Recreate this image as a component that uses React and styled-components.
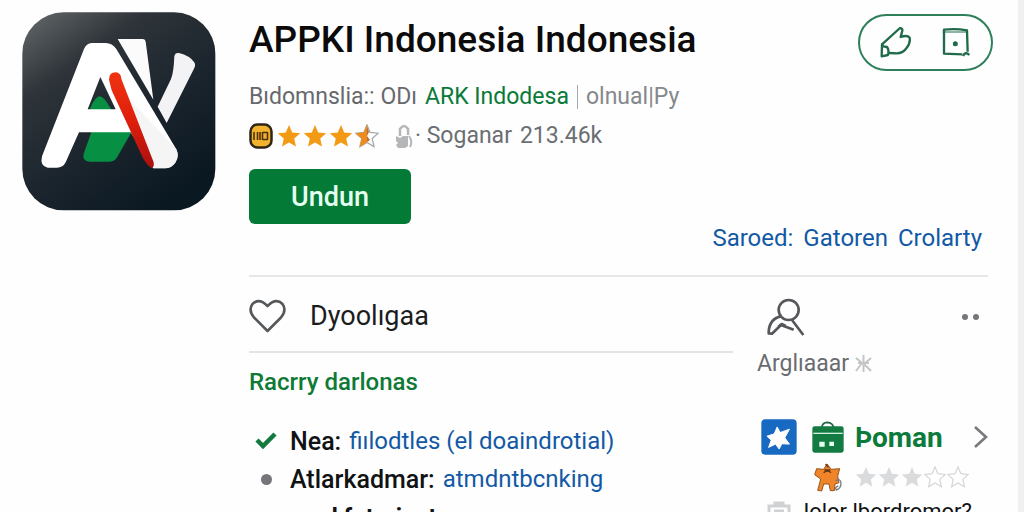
import React from 'react';
import styled, { createGlobalStyle } from 'styled-components';

const GlobalStyle = createGlobalStyle`
  * {
    box-sizing: border-box;
  }
  body {
    margin: 0;
    background: #fefefe;
    color: #1b1c1e;
    font-family: Roboto, 'Liberation Sans', sans-serif;
  }
  svg {
    display: block;
    flex: none;
  }
`;

const Page = styled.div`
  display: flex;
  align-items: flex-start;
  gap: 33px;
  height: 100vh;
  overflow: hidden;
  padding: 0 25px 0 22px;
  border-right: 6px solid #eff0f1;
`;

const LogoBox = styled.div`
  padding-top: 12px;
`;

const Main = styled.main`
  flex: 1;
  min-width: 0;
  padding-top: 14px;
`;

const Header = styled.header`
  display: flex;
  justify-content: space-between;
  align-items: flex-start;
`;

const Heading = styled.div`
  display: flex;
  flex-direction: column;
  align-items: flex-start;
  padding-top: 4px;
`;

const Title = styled.h1`
  margin: 0;
  font-size: 37px;
  font-weight: 500;
  line-height: 44px;
  color: #0b0b0c;
  white-space: nowrap;
`;

const Byline = styled.div`
  display: flex;
  gap: 8px;
  margin-top: 21px;
  font-size: 23px;
  line-height: 28px;
  color: #66696d;
  white-space: nowrap;
`;

const Publisher = styled.a`
  color: #087a38;
  text-decoration: none;
`;

const Separator = styled.span`
  width: 1px;
  height: 24px;
  margin-top: 2px;
  background: #a5a8ab;
`;

const Muted = styled.span`
  color: #85888c;
`;

const RatingRow = styled.div`
  display: flex;
  align-items: center;
  gap: 4px;
  margin-top: 11px;
  font-size: 23px;
  line-height: 28px;
  color: #6b6e72;
  white-space: nowrap;
`;

const Stars = styled.div`
  display: flex;
  gap: ${props => props.$gap}px;
`;

const Downloads = styled.span`
  display: flex;
  align-items: center;
  gap: 8px;
  margin-left: 12px;

  svg {
    margin-right: -6px;
  }
`;

const InstallButton = styled.button`
  width: 162px;
  height: 55px;
  margin-top: 19px;
  border: 0;
  border-radius: 6px;
  background: #047a37;
  color: #e6fff0;
  font: 500 27px Roboto, 'Liberation Sans', sans-serif;
`;

const ActionPill = styled.div`
  display: flex;
  align-items: center;
  gap: 30px;
  height: 57px;
  padding: 0 20px;
  border: 2px solid #2f7f5a;
  border-radius: 29px;
`;

const IconButton = styled.button`
  display: flex;
  padding: 0;
  border: 0;
  background: none;
  color: #1f6b49;
`;

const PolicyLinks = styled.nav`
  display: flex;
  justify-content: flex-end;
  gap: 10px;
  padding-right: 11px;
  font-size: 24px;
  line-height: 28px;
  white-space: nowrap;
`;

const BlueLink = styled.a`
  color: #1259a5;
  text-decoration: none;
`;

const Details = styled.div`
  display: grid;
  grid-template-columns: minmax(0, 1fr) 231px;
  column-gap: 24px;
  margin: 23px 5px 0 0;
  border-top: 2px solid #e4e6e8;
`;

const WishRow = styled.div`
  display: flex;
  align-items: center;
  gap: 24px;
  height: 76px;
  padding-top: 4px;
  border-bottom: 2px solid #e2e5e8;
`;

const WishLabel = styled.span`
  font-size: 27px;
  line-height: 36px;
`;

const SectionTitle = styled.h2`
  margin: 14px 0 0;
  font-size: 24px;
  font-weight: 500;
  line-height: 30px;
  color: #0e7a36;
`;

const FeatureList = styled.ul`
  margin: 25px 0 0;
  padding: 0;
  list-style: none;
`;

const Feature = styled.li`
  display: flex;
  align-items: center;
  height: 38px;
  font-size: ${props => (props.$strong ? 24 : 25)}px;
  font-weight: ${props => (props.$strong ? 700 : 500)};
  color: #111214;
  white-space: nowrap;

  a {
    margin-left: 8px;
    font-size: 24px;
    font-weight: 400;
  }
`;

const Marker = styled.span`
  display: flex;
  justify-content: center;
  width: 34px;
  margin-right: 7px;
`;

const Dot = styled.span`
  width: ${props => props.$size}px;
  height: ${props => props.$size}px;
  border-radius: 50%;
  background: #747679;
`;

const ProfileRow = styled.div`
  display: flex;
  align-items: center;
  justify-content: space-between;
  height: 73px;
  padding: 6px 9px 0 10px;
`;

const Dots = styled.span`
  display: flex;
  gap: 5px;
`;

const ProfileLabel = styled.div`
  display: flex;
  align-items: center;
  gap: 6px;
  font-size: 23px;
  line-height: 28px;
  color: #6a6c6f;
`;

const RelatedRow = styled.div`
  display: flex;
  align-items: center;
  gap: 15px;
  height: 38px;
  margin-top: 40px;
  padding-left: 4px;
`;

const RelatedName = styled.a`
  flex: 1;
  margin-left: -4px;
  font-size: 28px;
  font-weight: 700;
  color: #0b7a3b;
  text-decoration: none;
`;

const RelatedRating = styled.div`
  display: flex;
  align-items: center;
  gap: 12px;
  height: 34px;
  margin-top: 4px;
  padding-left: 56px;
`;

const RelatedNote = styled.div`
  display: flex;
  align-items: center;
  gap: 6px;
  padding-left: 10px;
  font-size: 22px;
  line-height: 36px;
  color: #111214;
  white-space: nowrap;
`;

const STAR = 'M12 1l3.2 7.4 8 .8-6 5.4 1.8 8L12 18.4 5 22.6l1.8-8-6-5.4 8-.8z';

function Star({ size = 24, fill, stroke = 'none' }) {
  return (
    <svg width={size} height={size} viewBox="0 0 24 24">
      <path d={STAR} fill={fill} stroke={stroke} strokeWidth="1.3" />
    </svg>
  );
}

function HalfStar() {
  return (
    <svg width="24" height="24" viewBox="0 0 24 24">
      <path d={STAR} fill="#fff" stroke="#a3a9a9" strokeWidth="1.3" />
      <path d="M12 0v18.4L4.5 23l2.2-8.4L.5 9.2l8.3-.8z" fill="#ef8b1b" />
      <path d="M12 2l2 6-2 4 3 4-3 2z" fill="#b86c3c" />
    </svg>
  );
}

function AppLogo() {
  return (
    <svg width="194" height="199" viewBox="35 37 582 597" role="img" aria-label="APPKI">
      <defs>
        <linearGradient id="tile" x1="0" y1="0" x2="0.7" y2="1">
          <stop offset="0" stopColor="#656a6c" />
          <stop offset="0.3" stopColor="#2e3439" />
          <stop offset="0.7" stopColor="#18222b" />
          <stop offset="1" stopColor="#0a1822" />
        </linearGradient>
        <linearGradient id="ribbon" x1="0" y1="0" x2="0" y2="1">
          <stop offset="0" stopColor="#ee3312" />
          <stop offset="0.5" stopColor="#e01f0b" />
          <stop offset="1" stopColor="#a90f10" />
        </linearGradient>
      </defs>
      <rect x="36" y="38" width="579" height="594" rx="124" fill="url(#tile)" />
      <path d="M322 118H398Q405 118 406 126L429 300Z" fill="#fbfbfc" />
      <path d="M492 170Q494 158 506 160Q538 168 551 187Q557 194 552 205L469 370L442 321L482 238Q490 220 492 170Z" fill="#f3f3f6" />
      <path d="M240 324Q256 290 268 290Q280 290 298 322L362 400L322 470Q314 486 298 486H238Q214 484 220 462L244 395Z" fill="#079044" />
      <path
        fillRule="evenodd"
        d="M244 130H286Q306 130 318 148L498 449Q508 470 495 489Q483 506 464 506H428L361 398H206L166 488Q158 504 140 504H112Q88 500 95 470L221 148Q228 131 244 130ZM270 232L232 329H316Z"
        fill="#fff"
      />
      <path d="M340 280L498 449Q508 470 495 489Q483 506 464 506H430Z" fill="#f2f1f2" opacity=".7" />
      <path d="M296 240Q296 218 316 218Q332 219 334 240L430 488Q432 504 424 505Q412 500 398 476L304 272Z" fill="url(#ribbon)" />
    </svg>
  );
}

function ThumbIcon() {
  return (
    <svg width="32" height="32" viewBox="120 76 96 96" fill="none" stroke="currentColor" strokeWidth="7" strokeLinejoin="round">
      <path d="M126 128L180 79Q188 80 187 87L182 106Q202 99 209 108Q212 125 198 141Q188 154 170 155L147 154" />
      <path d="M126 128L125 164L144 160Q148 145 141 136L130 134Z" />
    </svg>
  );
}

function SaveIcon() {
  return (
    <svg width="29" height="32" viewBox="304 76 87 96" fill="none" stroke="currentColor" strokeWidth="7" strokeLinejoin="round">
      <path d="M365 158L310 156V84Q345 80 379 86L381 150" />
      <path d="M306 91H379" strokeWidth="3" />
      <path d="M367 163Q374 148 386 160" />
      <circle cx="344" cy="126" r="4" fill="currentColor" />
    </svg>
  );
}

function BadgeIcon() {
  return (
    <svg width="24" height="26" viewBox="0 0 24 26">
      <rect x="1.5" y="1.5" width="21" height="23" rx="7" fill="#f3b22e" stroke="#2e2716" strokeWidth="2.5" />
      <path d="M5 9v8M8.5 9v8M11 9v8M13.5 9v8M18.5 9v8M13.5 9.5h5M13.5 16.5h5" stroke="#4d3309" strokeWidth="1.6" />
    </svg>
  );
}

function LockIcon() {
  return (
    <svg width="18" height="25" viewBox="0 0 18 25" fill="#b4b6b8">
      <path d="M5 12V5Q9-1 13 5v6" fill="none" stroke="#b4b6b8" strokeWidth="2.5" />
      <path d="M1 12l4 2 3-2 5 0v10l-3 2H3l-2-3 2-2-2-2z" />
      <path d="M14 12q4 5 1 11" fill="none" stroke="#b4b6b8" strokeWidth="2" />
    </svg>
  );
}

function HeartIcon() {
  return (
    <svg width="37" height="34" viewBox="0 0 37 34" fill="none" stroke="#55585b" strokeWidth="2.6" strokeLinejoin="round">
      <path d="M18.5 32L5 18.5Q-1 11 3.5 5Q10-1.5 18.5 7Q27-1.5 33.5 5Q38 11 32 18.5Z" />
    </svg>
  );
}

function ProfileIcon() {
  return (
    <svg width="38" height="38" viewBox="200 260 114 114" fill="none" stroke="#55575a" strokeWidth="8" strokeLinejoin="round">
      <circle cx="265" cy="296" r="30" />
      <path d="M241 315Q205 324 205 366L215 367L242 341L280 355M275 326L309 371" />
      <path d="M234 346l10-8 12 6" />
    </svg>
  );
}

function SparkIcon() {
  return (
    <svg width="17" height="18" viewBox="0 0 17 18" fill="none" stroke="#c3c5c6" strokeWidth="2">
      <path d="M8.5 0v17M1 3l6 5-6 8M16 3l-7 6 7 7M3 8h11" />
    </svg>
  );
}

function CheckIcon() {
  return (
    <svg width="22" height="18" viewBox="0 0 22 18" fill="none" stroke="#127a3f" strokeWidth="4.5">
      <path d="M2 8l6 6L20 2" />
    </svg>
  );
}

function BlueStarIcon() {
  return (
    <svg width="36" height="36" viewBox="64 53 109 109">
      <rect x="65" y="54" width="107" height="107" rx="12" fill="#1769c2" />
      <path
        d="M113 77L122 94L150 84L136 110L150 129L127 128L119 144L108 129L87 139L95 117L82 105L104 98Z"
        fill="#fff"
        stroke="#fff"
        strokeWidth="3"
        strokeLinejoin="round"
      />
    </svg>
  );
}

function CaseIcon() {
  return (
    <svg width="32" height="32" viewBox="218 60 96 96">
      <path d="M247 80Q249 64 264 64Q280 65 283 80" fill="none" stroke="#1c6645" strokeWidth="5" />
      <rect x="219" y="76" width="94" height="79" rx="7" fill="#137b41" />
      <path d="M222 97h88" stroke="#cfeedd" strokeWidth="4" />
      <path d="M240 122h16v15h-16zM270 122h14v13h-14z" fill="#e3fff0" />
    </svg>
  );
}

function MascotIcon() {
  return (
    <svg width="30" height="30" viewBox="220 184 90 90">
      <path
        d="M262 190L275 206L300 204L294 226L298 246L286 250L284 270H272L268 250L252 250L246 271L234 269L240 247L243 235L225 222L231 204L252 206Z"
        fill="#ef8429"
        stroke="#99551c"
        strokeWidth="3"
      />
      <path d="M252 216q12-10 22 0M254 208l18 0M258 190l8 10" fill="none" stroke="#633615" strokeWidth="4" />
      <path d="M288 240q16-8 16 8t-14 20q-6-8 6-12" fill="none" stroke="#747b86" strokeWidth="4" />
    </svg>
  );
}

function ChevronIcon() {
  return (
    <svg width="15" height="24" viewBox="0 0 15 24" fill="none" stroke="#77797c" strokeWidth="2.6">
      <path d="M2 2l11 10L2 22" />
    </svg>
  );
}

function BoxIcon() {
  return (
    <svg width="24" height="24" viewBox="0 0 24 24" fill="none" stroke="#cfd1d3" strokeWidth="3">
      <path d="M2 6h20v16H2zM8 6V3h8v3M7 11h10" />
    </svg>
  );
}

function App() {
  return (
    <>
      <GlobalStyle />
      <Page>
        <LogoBox>
          <AppLogo />
        </LogoBox>
        <Main>
          <Header>
            <Heading>
              <Title>APPKI Indonesia Indonesia</Title>
              <Byline>
                <span>Bıdomnslia:: ODı</span>
                <Publisher href="#publisher">ARK Indodesa</Publisher>
                <Separator />
                <Muted>olnual|Py</Muted>
              </Byline>
              <RatingRow>
                <BadgeIcon />
                <Stars $gap={2}>
                  <Star fill="#f39a14" />
                  <Star fill="#f39a14" />
                  <Star fill="#f39a14" />
                  <HalfStar />
                </Stars>
                <Downloads>
                  <LockIcon />
                  <span>· Soganar</span>
                  <span>213.46k</span>
                </Downloads>
              </RatingRow>
              <InstallButton type="button">Undun</InstallButton>
            </Heading>
            <ActionPill>
              <IconButton type="button" aria-label="Like">
                <ThumbIcon />
              </IconButton>
              <IconButton type="button" aria-label="Save">
                <SaveIcon />
              </IconButton>
            </ActionPill>
          </Header>
          <PolicyLinks>
            <BlueLink href="#saroed">Saroed:</BlueLink>
            <BlueLink href="#gatoren">Gatoren</BlueLink>
            <BlueLink href="#crolarty">Crolarty</BlueLink>
          </PolicyLinks>
          <Details>
            <section>
              <WishRow>
                <IconButton type="button" aria-label="Wishlist">
                  <HeartIcon />
                </IconButton>
                <WishLabel>Dyoolıgaa</WishLabel>
              </WishRow>
              <SectionTitle>Racrry darlonas</SectionTitle>
              <FeatureList>
                <Feature>
                  <Marker>
                    <CheckIcon />
                  </Marker>
                  Nea:
                  <BlueLink href="#features">fiılodtles (el doaindrotial)</BlueLink>
                </Feature>
                <Feature>
                  <Marker>
                    <Dot $size={11} />
                  </Marker>
                  Atlarkadmar:
                  <BlueLink href="#banking">atmdntbcnking</BlueLink>
                </Feature>
                <Feature $strong>
                  <Marker>
                    <Dot $size={11} />
                  </Marker>
                  ozrd fntorinat
                </Feature>
              </FeatureList>
            </section>
            <aside>
              <ProfileRow>
                <ProfileIcon />
                <IconButton type="button" aria-label="More">
                  <Dots>
                    <Dot $size={6} />
                    <Dot $size={6} />
                  </Dots>
                </IconButton>
              </ProfileRow>
              <ProfileLabel>
                Arglıaaar
                <SparkIcon />
              </ProfileLabel>
              <RelatedRow>
                <BlueStarIcon />
                <CaseIcon />
                <RelatedName href="#poman">Þoman</RelatedName>
                <ChevronIcon />
              </RelatedRow>
              <RelatedRating>
                <MascotIcon />
                <Stars $gap={1}>
                  <Star size={22} fill="#d9dbdd" />
                  <Star size={22} fill="#d9dbdd" />
                  <Star size={22} fill="#d9dbdd" />
                  <Star size={22} fill="#fff" stroke="#d3d5d7" />
                  <Star size={22} fill="#fff" stroke="#d3d5d7" />
                </Stars>
              </RelatedRating>
              <RelatedNote>
                <BoxIcon />
                Jolor lbordromor?
              </RelatedNote>
            </aside>
          </Details>
        </Main>
      </Page>
    </>
  );
}

export default App;
